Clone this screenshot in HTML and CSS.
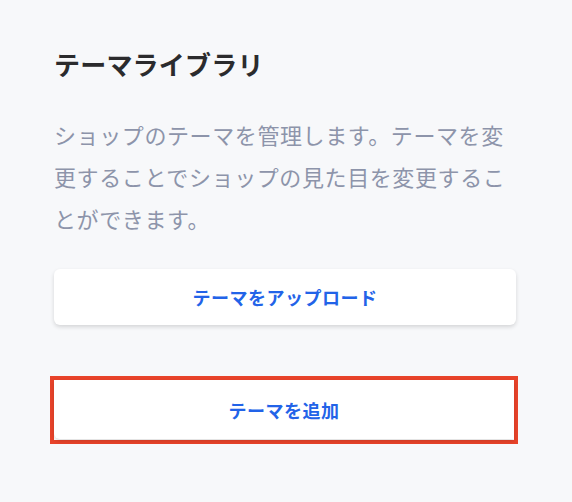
FILE: index.html
```html
<!DOCTYPE html>
<html lang="ja">
<head>
    <meta charset="UTF-8">
    <title>テーマライブラリ</title>
    <link rel="stylesheet" href="styles.css">
</head>
<body>
    <div class="panel">
        <h1>テーマライブラリ</h1>
        <p class="lead">ショップのテーマを管理します。テーマを変更することでショップの見た目を変更することができます。</p>

        <div class="actions">
            <button type="button" class="btn">テーマをアップロード</button>
            <div class="highlight">
                <button type="button" class="btn btn-add">テーマを追加</button>
            </div>
        </div>
    </div>
</body>
</html>
```

FILE: styles.css
```css
/* Общи стилове */
body {
    font-family: "Noto Sans CJK JP", "Noto Sans", sans-serif;
    background-color: #f7f8fa;
    margin: 0;
}

.panel {
    padding: 46px 56px 0 54px;
}

h1 {
    margin: 0 0 31px;
    font-size: 26px;
    line-height: 36px;
    font-weight: bold;
    letter-spacing: 0.2px;
    color: #2b2b2d;
}

.lead {
    margin: 0;
    font-size: 22px;
    line-height: 42px;
    letter-spacing: 0.6px;
    color: #8d94aa;
}

/* Бутони */
.actions {
    display: flex;
    flex-direction: column;
    gap: 51px;
    margin-top: 30px;
}

.btn {
    height: 56px;
    border: none;
    border-radius: 6px;
    background: white;
    box-shadow: 0 2px 4px rgba(0, 0, 0, 0.14);
    font-family: inherit;
    font-size: 18px;
    font-weight: bold;
    letter-spacing: 0.5px;
    color: #2263e8;
    cursor: pointer;
}

/* Маркиран бутон */
.highlight {
    display: flex;
    height: 60px;
    margin: 0 -2px 0 -4px;
    border: 4px solid #e8432a;
    background: white;
}

.btn-add {
    flex: 1;
    height: 59px;
    border-radius: 0 0 0 6px;
}
```
